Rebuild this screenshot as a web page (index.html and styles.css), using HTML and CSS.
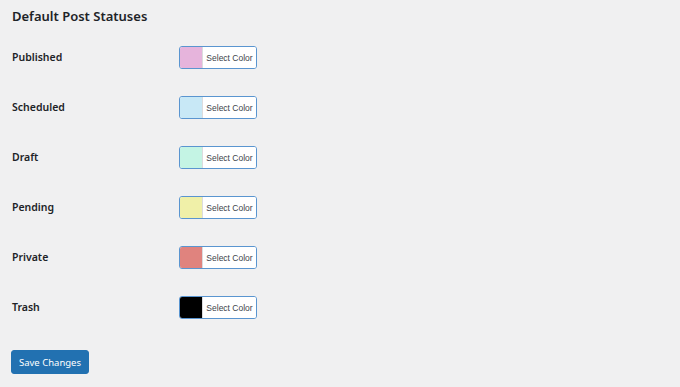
FILE: index.html
```html
<!DOCTYPE html>
<html lang="en">
<head>
<meta charset="utf-8">
<title>Default Post Statuses</title>
<link rel="stylesheet" href="styles.css">
</head>
<body>
<div class="wrap">
  <h2 class="title">Default Post Statuses</h2>
  <div class="form-table">
    <div class="row">
      <div class="label">Published</div>
      <button class="color-result" type="button"><span class="swatch" style="background:#e6b4dc"></span><span class="color-text">Select Color</span></button>
    </div>
    <div class="row">
      <div class="label">Scheduled</div>
      <button class="color-result" type="button"><span class="swatch" style="background:#c8e8f6"></span><span class="color-text">Select Color</span></button>
    </div>
    <div class="row">
      <div class="label">Draft</div>
      <button class="color-result" type="button"><span class="swatch" style="background:#c4f4e4"></span><span class="color-text">Select Color</span></button>
    </div>
    <div class="row">
      <div class="label">Pending</div>
      <button class="color-result" type="button"><span class="swatch" style="background:#f0f0a8"></span><span class="color-text">Select Color</span></button>
    </div>
    <div class="row">
      <div class="label">Private</div>
      <button class="color-result" type="button"><span class="swatch" style="background:#e0837e"></span><span class="color-text">Select Color</span></button>
    </div>
    <div class="row">
      <div class="label">Trash</div>
      <button class="color-result" type="button"><span class="swatch" style="background:#000000"></span><span class="color-text">Select Color</span></button>
    </div>
  </div>
  <p class="submit"><button class="button-primary" type="button">Save Changes</button></p>
</div>
</body>
</html>
```

FILE: styles.css
```css
body {margin:0;background:#f0f0f1;color:#1d2327;font-family:"Noto Sans","Open Sans",sans-serif;}
.wrap {padding:0 12px;}
.title {margin:0;padding-top:7px;font-size:13px;line-height:18px;font-weight:600;}
.form-table {margin-top:7px;}
.row {height:50px;display:flex;align-items:center;}
.label {width:167px;font-size:10.5px;font-weight:600;}
.color-result {display:flex;align-items:stretch;height:23px;width:78px;padding:0;margin:0;border:1px solid #5a95d0;border-radius:3px;background:#fff;overflow:hidden;cursor:pointer;}
.swatch {width:22px;border-right:1px solid #dcdcde;}
.color-text {flex:1;display:flex;align-items:center;justify-content:center;padding-top:1px;font-family:inherit;font-size:8.5px;color:#3c434a;background:#fff;}
.submit {margin:18px 0 0;}
.button-primary {display:block;height:24px;width:78px;margin-left:-1px;padding:0;border:1px solid #2271b1;border-radius:3px;background:#2271b1;color:#fff;font-family:inherit;font-size:9.5px;cursor:pointer;}
```
